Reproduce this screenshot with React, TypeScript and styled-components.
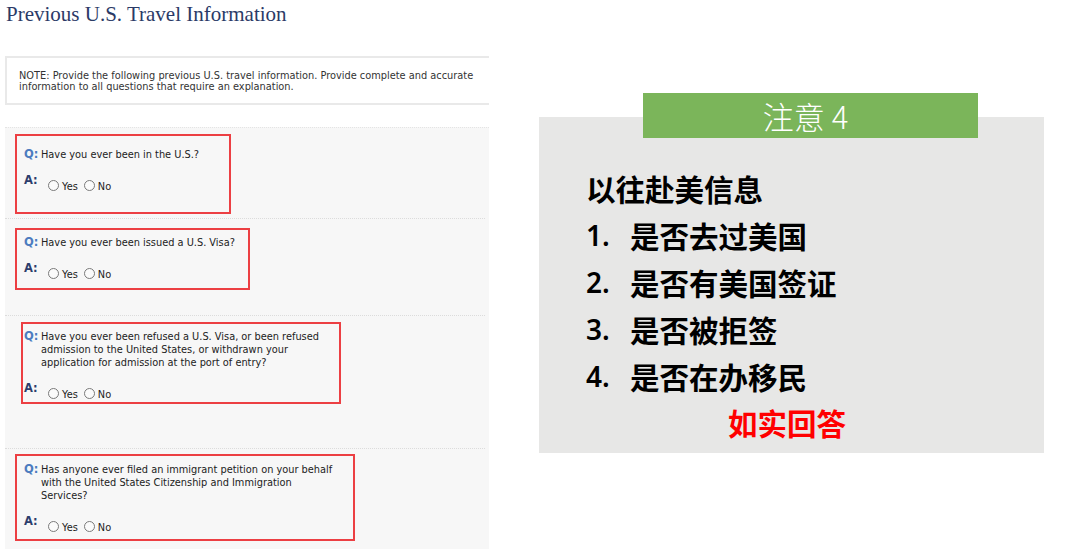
import React from 'react';
import styled, { createGlobalStyle } from 'styled-components';

const GlobalStyle = createGlobalStyle`
  html, body {
    margin: 0;
    padding: 0;
    background: #ffffff;
  }
  body {
    width: 1080px;
    height: 554px;
    overflow: hidden;
  }
`;

const Page = styled.div`
  display: flex;
  align-items: flex-start;
  width: 1080px;
  height: 554px;
`;

const FormColumn = styled.div`
  width: 484px;
  padding-left: 5px;
  flex-shrink: 0;
`;

const Title = styled.h1`
  margin: 0 0 28px 1px;
  height: 28px;
  line-height: 28px;
  font-family: "Liberation Serif", "Times New Roman", serif;
  font-weight: normal;
  font-size: 21px;
  color: #2b3a67;
`;

const NoteBox = styled.div`
  box-sizing: border-box;
  height: 49px;
  border: 2px solid #e9e9e9;
  border-right: none;
  padding: 12px 0 0 12px;
  font-family: "DejaVu Sans", Verdana, sans-serif;
  font-size: 9.8px;
  line-height: 11px;
  color: #333;
  background: #fff;
  white-space: nowrap;
`;

const QuestionArea = styled.div`
  margin-top: 22px;
  background: #f7f7f7;
  border-top: 1px dotted #e4e4e4;
  height: 421px;
`;

const Section = styled.div<{ $h: number; $top: number; $line?: boolean }>`
  box-sizing: border-box;
  height: ${p => p.$h}px;
  padding-top: ${p => p.$top}px;
  padding-left: 10px;
  border-top: ${p => (p.$line ? '1px dotted #dcdcdc' : 'none')};
  margin: 0 4px 0 0;
`;

const Marked = styled.div<{ $w: number; $indent?: number; $pl?: number; $pt: number; $pb: number }>`
  box-sizing: border-box;
  width: ${p => p.$w}px;
  margin-left: ${p => p.$indent || 0}px;
  border: 2px solid #ec3f43;
  padding: ${p => p.$pt}px 0 ${p => p.$pb}px ${p => p.$pl ?? 7}px;
  font-family: "DejaVu Sans", Verdana, sans-serif;
  font-size: 9.8px;
  line-height: 13px;
  color: #222;
  white-space: nowrap;
`;

const Row = styled.div<{ $gap?: number }>`
  display: grid;
  grid-template-columns: 17px auto;
  margin-top: ${p => p.$gap || 0}px;
`;

const QLabel = styled.span`
  font-weight: bold;
  font-size: 11.5px;
  color: #4c7cbf;
`;

const ALabel = styled.span`
  font-weight: bold;
  font-size: 11.5px;
  color: #2c3d6c;
  margin-top: -4px;
`;

const Options = styled.div`
  display: flex;
  align-items: center;
  padding-left: 7px;
`;

const Radio = styled.span`
  display: inline-block;
  box-sizing: border-box;
  width: 11px;
  height: 11px;
  border-radius: 50%;
  border: 1px solid #7a7a7a;
  background: #fbfbfb;
  margin-right: 3px;
`;

const OptionText = styled.span`
  margin-right: 6px;
  padding-top: 2px;
`;

const NoticeColumn = styled.div`
  display: flex;
  flex-direction: column;
  padding-top: 93px;
  margin-left: 50px;
`;

const NoticeTag = styled.div`
  position: relative;
  z-index: 1;
  width: 335px;
  height: 45px;
  margin-left: 104px;
  margin-bottom: -21px;
  padding-right: 10px;
  box-sizing: border-box;
  background: #7bb55a;
  color: #fff;
  font-family: "Noto Sans CJK SC", sans-serif;
  font-weight: 300;
  font-size: 31px;
  line-height: 45px;
  text-align: center;
`;

const NoticePanel = styled.div`
  box-sizing: border-box;
  width: 505px;
  height: 336px;
  background: #e7e7e6;
  padding: 48px 0 0 47px;
  font-family: "Noto Sans CJK SC", sans-serif;
  font-weight: 700;
  font-size: 29.5px;
  line-height: 47px;
  color: #000;
`;

const PanelLine = styled.div``;

const ListItem = styled.div`
  display: grid;
  grid-template-columns: 44px auto;
`;

const Num = styled.span`
  font-family: "Noto Sans", sans-serif;
  font-weight: 600;
  font-size: 28px;
`;

const Emphasis = styled.div`
  color: #ff0000;
  padding-left: 142px;
  line-height: 45px;
`;

const questions = [
  { h: 90, top: 6, w: 216, pt: 12, pb: 19, lines: ['Have you ever been in the U.S.?'] },
  { h: 97, top: 9, w: 235, pt: 6, pb: 7, lines: ['Have you ever been issued a U.S. Visa?'] },
  {
    h: 133, top: 6, w: 320, indent: 6, pl: 1, pt: 6, pb: 1,
    lines: [
      'Have you ever been refused a U.S. Visa, or been refused',
      'admission to the United States, or withdrawn your',
      'application for admission at the port of entry?',
    ],
  },
  {
    h: 101, top: 5, w: 340, pt: 7, pb: 5,
    lines: [
      'Has anyone ever filed an immigrant petition on your behalf',
      'with the United States Citizenship and Immigration',
      'Services?',
    ],
  },
];

const items = ['是否去过美国', '是否有美国签证', '是否被拒签', '是否在办移民'];

const App: React.FC = () => {
  return (
    <Page>
      <GlobalStyle />
      <FormColumn>
        <Title>Previous U.S. Travel Information</Title>
        <NoteBox>
          NOTE: Provide the following previous U.S. travel information. Provide complete and accurate
          <br />
          information to all questions that require an explanation.
        </NoteBox>
        <QuestionArea>
          {questions.map((q, i) => (
            <Section key={i} $h={q.h} $top={q.top} $line={i > 0}>
              <Marked $w={q.w} $indent={q.indent} $pl={q.pl} $pt={q.pt} $pb={q.pb}>
                <Row>
                  <QLabel>Q:</QLabel>
                  <div>
                    {q.lines.map((l, j) => (
                      <div key={j}>{l}</div>
                    ))}
                  </div>
                </Row>
                <Row $gap={17}>
                  <ALabel>A:</ALabel>
                  <Options>
                    <Radio />
                    <OptionText>Yes</OptionText>
                    <Radio />
                    <OptionText>No</OptionText>
                  </Options>
                </Row>
              </Marked>
            </Section>
          ))}
        </QuestionArea>
      </FormColumn>
      <NoticeColumn>
        <NoticeTag>注意 4</NoticeTag>
        <NoticePanel>
          <PanelLine>以往赴美信息</PanelLine>
          {items.map((t, i) => (
            <ListItem key={i}>
              <Num>{i + 1}.</Num>
              <span>{t}</span>
            </ListItem>
          ))}
          <Emphasis>如实回答</Emphasis>
        </NoticePanel>
      </NoticeColumn>
    </Page>
  );
};

export default App;
